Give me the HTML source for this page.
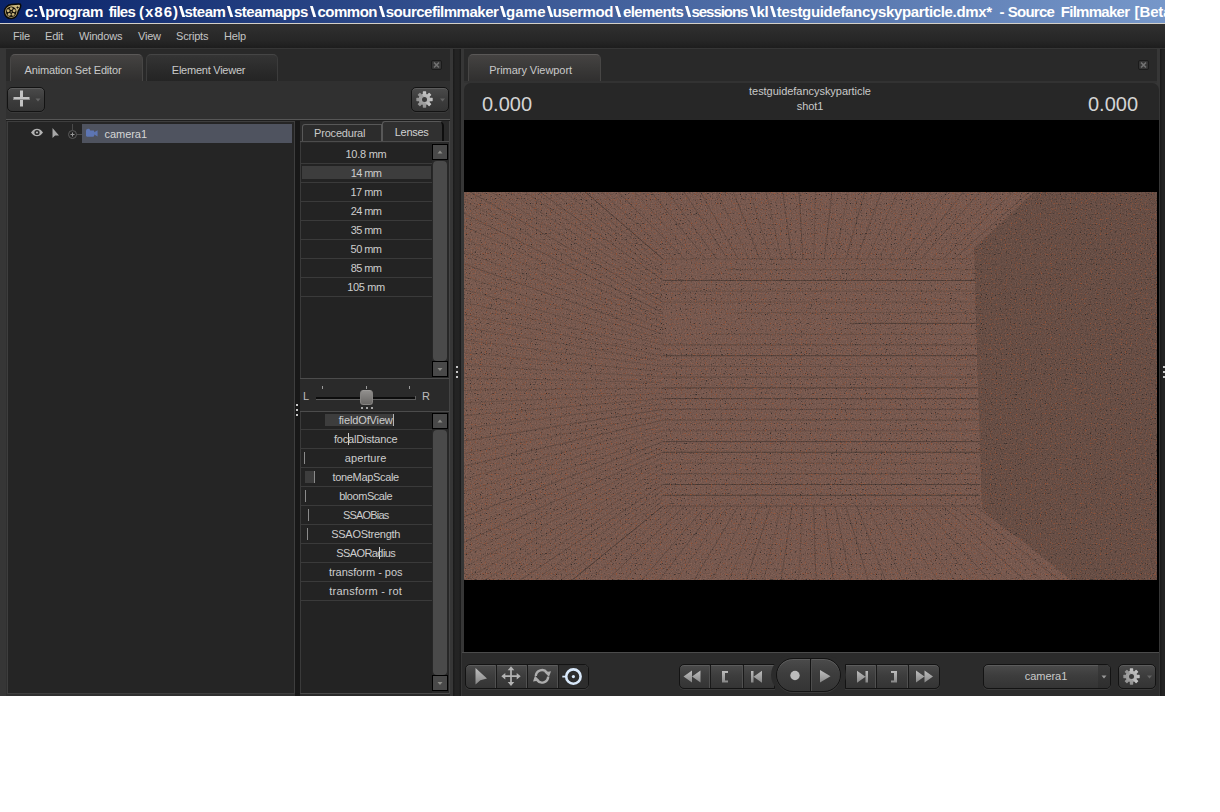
<!DOCTYPE html>
<html>
<head>
<meta charset="utf-8">
<title>Source Filmmaker</title>
<style>
*{box-sizing:border-box;margin:0;padding:0}
html,body{width:1220px;height:812px;background:#fff;overflow:hidden}
body{font-family:"Liberation Sans",sans-serif;font-size:11px;color:#c9c9c9}
#win{position:absolute;left:0;top:0;width:1165px;height:696px;background:#363636;overflow:hidden}
#win div,#win svg{position:absolute}
.t{white-space:nowrap;line-height:14px;height:14px;letter-spacing:-0.2px;color:#c9c9c9}
.c{text-align:center}
.tab{border:1px solid #474645;border-bottom:none;border-radius:5px 5px 0 0}
.tab.on{background:linear-gradient(#454342,#3a3938 50%,#302f2f);border-top-color:#5a5857}
.tab.off{background:linear-gradient(#343434,#2a2a2a 60%,#242424);border-color:#3c3c3c;border-top-color:#454545}
.btn{border:1px solid #131313;border-radius:5px;background:linear-gradient(#4b4b4b,#3d3d3d 45%,#343434);box-shadow:inset 0 1px 0 #5c5c5c,0 1px 0 #3a3a3a}
.xb{border:1px solid #1b1b1b;border-radius:2px;background:#353535}
.tw{top:1px;font-weight:bold;font-size:15px;line-height:21px;color:#fff;white-space:nowrap}
.big{font-size:20px;line-height:24px;height:24px;color:#d4d4d4;white-space:nowrap;letter-spacing:0}
</style>
</head>
<body>
<div id="win">
<div style="left:0px;top:0px;width:1165px;height:23px;background:linear-gradient(90deg,#0a246a 0%,#7697c9 100%);overflow:hidden"><div class="tw" style="left:25.00px;letter-spacing:0.000px">c:</div><div class="tw" style="left:39.78px;transform:scaleX(1.6)">\</div><div class="tw" style="left:45.25px;letter-spacing:-0.458px">program </div><div class="tw" style="left:108.75px;letter-spacing:-0.750px">files </div><div class="tw" style="left:139.00px;letter-spacing:1.000px">(x86)</div><div class="tw" style="left:179.78px;transform:scaleX(1.6)">\</div><div class="tw" style="left:184.50px;letter-spacing:-0.500px">steam</div><div class="tw" style="left:228.16px;transform:scaleX(1.6)">\</div><div class="tw" style="left:234.00px;letter-spacing:-0.500px">steamapps</div><div class="tw" style="left:310.66px;transform:scaleX(1.6)">\</div><div class="tw" style="left:317.50px;letter-spacing:-0.500px">common</div><div class="tw" style="left:379.66px;transform:scaleX(1.6)">\</div><div class="tw" style="left:385.75px;letter-spacing:-0.500px">sourcefilmmaker</div><div class="tw" style="left:501.16px;transform:scaleX(1.6)">\</div><div class="tw" style="left:506.00px;letter-spacing:0.167px">game</div><div class="tw" style="left:547.66px;transform:scaleX(1.6)">\</div><div class="tw" style="left:552.75px;letter-spacing:-0.458px">usermod</div><div class="tw" style="left:616.16px;transform:scaleX(1.6)">\</div><div class="tw" style="left:623.00px;letter-spacing:-0.607px">elements</div><div class="tw" style="left:686.16px;transform:scaleX(1.6)">\</div><div class="tw" style="left:691.50px;letter-spacing:-1.036px">sessions</div><div class="tw" style="left:751.16px;transform:scaleX(1.6)">\</div><div class="tw" style="left:756.50px;letter-spacing:-0.250px">kl</div><div class="tw" style="left:770.66px;transform:scaleX(1.6)">\</div><div class="tw" style="left:776.75px;letter-spacing:-0.336px">testguidefancyskyparticle.dmx* </div><div class="tw" style="left:999.50px;letter-spacing:0.000px">- </div><div class="tw" style="left:1007.75px;letter-spacing:-0.750px">Source </div><div class="tw" style="left:1060.75px;letter-spacing:-0.719px">Filmmaker </div><div class="tw" style="left:1134.50px;letter-spacing:-0.100px">[Beta]</div></div>
<svg style="left:2px;top:2px" width="21" height="19" viewBox="0 0 21 19" ><path d="M9.5 2.6C13 2.2 17 1.8 18.3 2.2C19.3 3.6 18.4 6.2 16.2 9.3C15.8 13.6 12.8 16.6 9.2 16.6C5.3 16.6 2.4 13.6 2.4 9.8C2.4 6 5.4 3 9.5 2.6Z" fill="#c9b57c" stroke="#0b0a06" stroke-width="1.5"/><circle cx="9.2" cy="9.8" r="5.3" fill="#15120a"/><g fill="#c9b57c"><circle cx="9.2" cy="6.6" r="1.45"/><circle cx="12.2" cy="8.8" r="1.45"/><circle cx="11.1" cy="12.4" r="1.45"/><circle cx="7.3" cy="12.4" r="1.45"/><circle cx="6.2" cy="8.8" r="1.45"/><circle cx="9.2" cy="9.9" r="0.7"/></g><path d="M15.6 3.9l.5 1.1 1.1.5-1.1.5-.5 1.1-.5-1.1-1.1-.5 1.1-.5z" fill="#15120a"/></svg>
<div style="left:0px;top:23px;width:1165px;height:1px;background:#d4d0c8"></div>
<div style="left:0px;top:24px;width:1165px;height:24px;background:linear-gradient(#303030,#262626 70%,#1d1d1d)"></div>
<div class="t" style="left:13px;top:29px;color:#c4c4c4">File</div>
<div class="t" style="left:45px;top:29px;color:#c4c4c4">Edit</div>
<div class="t" style="left:79px;top:29px;color:#c4c4c4">Windows</div>
<div class="t" style="left:138px;top:29px;color:#c4c4c4">View</div>
<div class="t" style="left:176px;top:29px;color:#c4c4c4">Scripts</div>
<div class="t" style="left:224px;top:29px;color:#c4c4c4">Help</div>
<div style="left:6px;top:49px;width:444px;height:647px;background:#303030"></div>
<div style="left:6px;top:49px;width:444px;height:32px;background:#292929"></div>
<div class="tab on" style="left:10px;top:54px;width:133px;height:27px;"></div>
<div class="t c" style="left:-77px;top:63px;width:300px;letter-spacing:-0.17px">Animation Set Editor</div>
<div class="tab off" style="left:146px;top:54px;width:132px;height:27px;"></div>
<div class="t c" style="left:58.5px;top:63px;width:300px;letter-spacing:-0.25px">Element Viewer</div>
<div class="xb" style="left:431px;top:60px;width:11px;height:10px;"><svg style="left:0;top:0" width="9" height="8" viewBox="0 0 9 8"><path d="M2 1.5L7 6.5M7 1.5L2 6.5" stroke="#727272" stroke-width="1.7" fill="none"/></svg></div>
<div class="btn" style="left:6.5px;top:86.5px;width:38px;height:25px;"></div>
<svg style="left:7px;top:87px" width="37" height="25" viewBox="0 0 37 25" ><path d="M6.5 11.5h16M14.5 3.5v16" stroke="#c2c2c2" stroke-width="3" fill="none"/><path d="M6.5 12.5h16" stroke="#8e8e8e" stroke-width="1" fill="none"/><path d="M28.5 11.5h5l-2.5 3z" fill="#646464"/></svg>
<div class="btn" style="left:410.5px;top:86.5px;width:38px;height:25px;"></div>
<svg style="left:410.5px;top:86.5px" width="38" height="25" viewBox="0 0 38 25" ><defs><linearGradient id="gg1" x1="0" y1="0" x2="0" y2="1"><stop offset="0" stop-color="#c6c6c6"/><stop offset="1" stop-color="#909090"/></linearGradient></defs><g transform="translate(13.5,12.5)"><g fill="url(#gg1)"><circle r="5.7"/><rect x="-1.7" y="-8.2" width="3.4" height="16.4" rx="0.6"/><rect x="-1.7" y="-8.2" width="3.4" height="16.4" rx="0.6" transform="rotate(45)"/><rect x="-1.7" y="-8.2" width="3.4" height="16.4" rx="0.6" transform="rotate(90)"/><rect x="-1.7" y="-8.2" width="3.4" height="16.4" rx="0.6" transform="rotate(135)"/></g><circle r="2.5" fill="#3b3b3b"/></g><path d="M29 11.5h5l-2.5 3z" fill="#646464"/></svg>
<div style="left:6px;top:119px;width:444px;height:1px;background:#565656"></div>
<div style="left:6px;top:120px;width:444px;height:1px;background:#1e1e1e"></div>
<div style="left:7px;top:121px;width:288px;height:573px;background:#252525;border:1px solid #3e3e3e"></div>
<div style="left:82px;top:124px;width:210px;height:19px;background:#4f535f"></div>
<div class="t" style="left:104.5px;top:127px;color:#d6d6d6;letter-spacing:-0.05px">camera1</div>
<svg style="left:28px;top:124px" width="58" height="19" viewBox="0 0 58 19" ><path d="M44.5 0v6M49 10.5h5" stroke="#4a4a4a" stroke-width="1" fill="none"/><circle cx="44.5" cy="10.5" r="4" fill="none" stroke="#5a5a5a" stroke-width="1"/><path d="M42.5 10.5h4M44.5 8.5v4" stroke="#9a9a9a" stroke-width="1" fill="none"/><path d="M3 8.5C5 5.6 7 4.8 9 4.8S13 5.6 15 8.5C13 11.4 11 12.2 9 12.2S5 11.4 3 8.5Z" fill="#b4b4b4"/><circle cx="9" cy="8.5" r="2.6" fill="#2a2a2a"/><circle cx="9" cy="8.5" r="1.1" fill="#b4b4b4"/><path d="M24.5 4v10l2.6-2.4L31 11.4z" fill="#a8a8a8"/></svg>
<svg style="left:85px;top:128px" width="14" height="10" viewBox="0 0 14 10" ><path d="M1 3.2C1 1.6 2 .8 3.2 .8S5 1.4 5.2 2.4H8.2C8.8 2.4 9.2 2.8 9.2 3.4V4.2L12.6 2.2V8.6L9.2 6.6V7.6C9.2 8.3 8.8 8.7 8.2 8.7H2.2C1.5 8.7 1 8.3 1 7.6Z" fill="#5d75b3"/></svg>
<div style="left:295px;top:121px;width:5px;height:575px;background:#181818"></div>
<div style="left:296px;top:404px;width:2px;height:2px;background:#c6c6c6"></div>
<div style="left:296px;top:409px;width:2px;height:2px;background:#c6c6c6"></div>
<div style="left:296px;top:414px;width:2px;height:2px;background:#c6c6c6"></div>
<div style="left:300px;top:121px;width:150px;height:575px;background:#2a2a2a"></div>
<div style="left:302px;top:124px;width:80px;height:17px;border:1px solid #585858;border-bottom:none;border-radius:3px 0 0 0;background:#2c2c2c"></div>
<div class="t c" style="left:189.7px;top:126px;width:300px;letter-spacing:-0.2px">Procedural</div>
<div style="left:382px;top:121px;width:62px;height:20px;border:1px solid #585858;border-bottom:none;border-right:2px solid #0e0e0e;border-radius:3px 5px 0 0;background:#303030"></div>
<div class="t c" style="left:261.6px;top:125px;width:300px;letter-spacing:-0.3px;color:#d2d2d2">Lenses</div>
<div style="left:300px;top:141px;width:150px;height:1px;background:#4c4c4c"></div>
<div style="left:300px;top:142px;width:1px;height:236px;background:#3a3a3a"></div>
<div style="left:301px;top:143px;width:131px;height:235px;background:#232323"></div>
<div style="left:302px;top:166px;width:129px;height:13px;background:#3d3d3d"></div>
<div style="left:301px;top:163px;width:131px;height:1px;background:#3a3a3a"></div>
<div class="t c" style="left:216.0px;top:147px;width:300px;letter-spacing:-0.25px;color:#cdcdcd">10.8 mm</div>
<div style="left:301px;top:182px;width:131px;height:1px;background:#3a3a3a"></div>
<div class="t c" style="left:216.0px;top:166px;width:300px;letter-spacing:-0.6px;color:#cdcdcd">14 mm</div>
<div style="left:301px;top:201px;width:131px;height:1px;background:#3a3a3a"></div>
<div class="t c" style="left:216.0px;top:185px;width:300px;letter-spacing:-0.5px;color:#cdcdcd">17 mm</div>
<div style="left:301px;top:220px;width:131px;height:1px;background:#3a3a3a"></div>
<div class="t c" style="left:216.0px;top:204px;width:300px;letter-spacing:-0.6px;color:#cdcdcd">24 mm</div>
<div style="left:301px;top:239px;width:131px;height:1px;background:#3a3a3a"></div>
<div class="t c" style="left:216.0px;top:223px;width:300px;letter-spacing:-0.6px;color:#cdcdcd">35 mm</div>
<div style="left:301px;top:258px;width:131px;height:1px;background:#3a3a3a"></div>
<div class="t c" style="left:216.0px;top:242px;width:300px;letter-spacing:-0.55px;color:#cdcdcd">50 mm</div>
<div style="left:301px;top:277px;width:131px;height:1px;background:#3a3a3a"></div>
<div class="t c" style="left:216.0px;top:261px;width:300px;letter-spacing:-0.6px;color:#cdcdcd">85 mm</div>
<div style="left:301px;top:296px;width:131px;height:1px;background:#3a3a3a"></div>
<div class="t c" style="left:216.0px;top:280px;width:300px;letter-spacing:-0.35px;color:#cdcdcd">105 mm</div>
<div style="left:432px;top:144px;width:17px;height:234px;background:#272727"></div>
<div style="left:433px;top:161px;width:14px;height:200px;background:#4a4a4a;border-radius:4px"></div>
<div style="left:432px;top:144px;width:16px;height:16px;background:#494949;border:1px solid #000"></div>
<svg style="left:432px;top:144px" width="16" height="16" viewBox="0 0 16 16" ><path d="M5.500 9.500l2.500-3 2.500 3z" fill="#8c8c88"/></svg>
<div style="left:432px;top:361px;width:16px;height:16px;background:#494949;border:1px solid #000"></div>
<svg style="left:432px;top:361px" width="16" height="16" viewBox="0 0 16 16" ><path d="M5.500 7l2.500 3 2.500-3z" fill="#8c8c88"/></svg>
<div style="left:300px;top:378px;width:150px;height:1px;background:#4c4c4c"></div>
<div class="t" style="left:303px;top:389px;color:#bdbdbd">L</div>
<div class="t" style="left:422px;top:389px;color:#bdbdbd">R</div>
<div style="left:316px;top:396.5px;width:99px;height:2px;background:#0c0c0c"></div>
<div style="left:316px;top:399px;width:100px;height:1px;background:#5c5c5c"></div>
<div style="left:415px;top:395.5px;width:1px;height:4px;background:#5c5c5c"></div>
<div style="left:322px;top:386px;width:1px;height:3px;background:#9a9a9a"></div>
<div style="left:366px;top:386px;width:1px;height:3px;background:#9a9a9a"></div>
<div style="left:409px;top:386px;width:1px;height:3px;background:#9a9a9a"></div>
<div style="left:360px;top:390px;width:13px;height:15px;border-radius:3.500px;background:linear-gradient(#908e8c,#6a6866);border:1px solid #858381;border-top-color:#9c9a98"></div>
<div style="left:361px;top:407px;width:1.5px;height:2px;background:#a4a4a4"></div>
<div style="left:366px;top:407px;width:1.5px;height:2px;background:#a4a4a4"></div>
<div style="left:371px;top:407px;width:1.5px;height:2px;background:#a4a4a4"></div>
<div style="left:300px;top:411px;width:150px;height:1px;background:#4c4c4c"></div>
<div style="left:300px;top:412px;width:1px;height:282px;background:#3a3a3a"></div>
<div style="left:301px;top:412px;width:131px;height:281px;background:#232323"></div>
<div style="left:325px;top:413.5px;width:68px;height:12.5px;background:#3d3d3d"></div>
<div style="left:301px;top:429px;width:131px;height:1px;background:#3a3a3a"></div>
<div class="t c" style="left:215.7px;top:413px;width:300px;letter-spacing:-0.13px;color:#cdcdcd">fieldOfView</div>
<div style="left:301px;top:448px;width:131px;height:1px;background:#3a3a3a"></div>
<div class="t c" style="left:215.7px;top:432px;width:300px;letter-spacing:-0.2px;color:#cdcdcd">focalDistance</div>
<div style="left:301px;top:467px;width:131px;height:1px;background:#3a3a3a"></div>
<div class="t c" style="left:215.7px;top:451px;width:300px;letter-spacing:0.11px;color:#cdcdcd">aperture</div>
<div style="left:301px;top:486px;width:131px;height:1px;background:#3a3a3a"></div>
<div class="t c" style="left:215.7px;top:470px;width:300px;letter-spacing:-0.32px;color:#cdcdcd">toneMapScale</div>
<div style="left:301px;top:505px;width:131px;height:1px;background:#3a3a3a"></div>
<div class="t c" style="left:215.7px;top:489px;width:300px;letter-spacing:-0.45px;color:#cdcdcd">bloomScale</div>
<div style="left:301px;top:524px;width:131px;height:1px;background:#3a3a3a"></div>
<div class="t c" style="left:215.7px;top:508px;width:300px;letter-spacing:-0.8px;color:#cdcdcd">SSAOBias</div>
<div style="left:301px;top:543px;width:131px;height:1px;background:#3a3a3a"></div>
<div class="t c" style="left:215.7px;top:527px;width:300px;letter-spacing:-0.26px;color:#cdcdcd">SSAOStrength</div>
<div style="left:301px;top:562px;width:131px;height:1px;background:#3a3a3a"></div>
<div class="t c" style="left:215.7px;top:546px;width:300px;letter-spacing:-0.57px;color:#cdcdcd">SSAORadius</div>
<div style="left:301px;top:581px;width:131px;height:1px;background:#3a3a3a"></div>
<div class="t c" style="left:215.7px;top:565px;width:300px;letter-spacing:-0.03px;color:#cdcdcd">transform - pos</div>
<div style="left:301px;top:600px;width:131px;height:1px;background:#3a3a3a"></div>
<div class="t c" style="left:215.7px;top:584px;width:300px;letter-spacing:0.25px;color:#cdcdcd">transform - rot</div>
<div style="left:432px;top:413px;width:17px;height:279px;background:#272727"></div>
<div style="left:433px;top:430px;width:14px;height:245px;background:#4a4a4a;border-radius:4px"></div>
<div style="left:432px;top:413px;width:16px;height:16px;background:#494949;border:1px solid #000"></div>
<svg style="left:432px;top:413px" width="16" height="16" viewBox="0 0 16 16" ><path d="M5.500 9.500l2.500-3 2.500 3z" fill="#8c8c88"/></svg>
<div style="left:432px;top:675px;width:16px;height:16px;background:#494949;border:1px solid #000"></div>
<svg style="left:432px;top:675px" width="16" height="16" viewBox="0 0 16 16" ><path d="M5.500 7l2.500 3 2.500-3z" fill="#8c8c88"/></svg>
<div style="left:300px;top:693px;width:150px;height:1px;background:#4a4a4a"></div>
<div style="left:449px;top:121px;width:1px;height:573px;background:#444"></div>
<div style="left:393px;top:413.5px;width:1px;height:12.5px;background:#b4b4b4"></div>
<div style="left:348px;top:433px;width:1px;height:12px;background:#cfcfcf"></div>
<div style="left:304px;top:452px;width:1px;height:12px;background:#8a8a8a"></div>
<div style="left:305px;top:471px;width:9px;height:12px;background:#3d3d3d"></div>
<div style="left:314px;top:471px;width:1px;height:12px;background:#8a8a8a"></div>
<div style="left:305px;top:490px;width:1px;height:12px;background:#8a8a8a"></div>
<div style="left:308px;top:509px;width:1px;height:12px;background:#8a8a8a"></div>
<div style="left:307px;top:528px;width:1px;height:12px;background:#8a8a8a"></div>
<div style="left:379px;top:547px;width:1px;height:12px;background:#cfcfcf"></div>
<div style="left:453px;top:49px;width:8px;height:647px;background:linear-gradient(90deg,#191919,#232323 30%,#232323 70%,#191919)"></div>
<div style="left:456px;top:366px;width:2px;height:2px;background:#c6c6c6"></div>
<div style="left:456px;top:371px;width:2px;height:2px;background:#c6c6c6"></div>
<div style="left:456px;top:376px;width:2px;height:2px;background:#c6c6c6"></div>
<div style="left:1160px;top:49px;width:5px;height:647px;background:linear-gradient(90deg,#191919,#232323 50%,#232323)"></div>
<div style="left:1163px;top:366px;width:2px;height:2px;background:#c6c6c6"></div>
<div style="left:1163px;top:371px;width:2px;height:2px;background:#c6c6c6"></div>
<div style="left:1163px;top:376px;width:2px;height:2px;background:#c6c6c6"></div>
<div style="left:464px;top:49px;width:693px;height:34px;background:#292929"></div>
<div style="left:464px;top:81px;width:693px;height:2px;background:#323232"></div>
<div class="tab on" style="left:468px;top:54px;width:133px;height:27px;"></div>
<div class="t c" style="left:380.70000000000005px;top:63px;width:300px;letter-spacing:-0.05px">Primary Viewport</div>
<div class="xb" style="left:1138px;top:60px;width:11px;height:10px;"><svg style="left:0;top:0" width="9" height="8" viewBox="0 0 9 8"><path d="M2 1.5L7 6.5M7 1.5L2 6.5" stroke="#727272" stroke-width="1.7" fill="none"/></svg></div>
<div style="left:464px;top:83px;width:695px;height:613px;background:#272727;border-radius:7px 7px 0 0"></div>
<div class="big" style="left:482px;top:92px">0.000</div>
<div class="big" style="left:1088px;top:92px">0.000</div>
<div class="t c" style="left:660px;top:84px;width:300px;letter-spacing:-0.04px">testguidefancyskyparticle</div>
<div class="t c" style="left:660px;top:99px;width:300px;letter-spacing:-0.1px">shot1</div>
<div style="left:464px;top:120px;width:695px;height:532px;background:#000"></div>
<div style="left:462px;top:652px;width:697px;height:44px;background:#2b2b2b"></div>
<div style="left:462px;top:652px;width:697px;height:1px;background:#4b4b4b"></div>
<svg style="left:464px;top:192px" width="693" height="388" viewBox="0 0 693 388" ><defs><filter id="nz" x="0" y="0" width="100%" height="100%" color-interpolation-filters="sRGB"><feTurbulence type="fractalNoise" baseFrequency="0.8" numOctaves="1" seed="4" result="t"/><feColorMatrix in="t" type="matrix" values="1.3 0 0 0 -0.15  0.9 0 0 0 0.05  0.8 0 0 0 0.1  0 0 0 0 1" result="n"/><feComposite in="SourceGraphic" in2="n" operator="arithmetic" k1="0" k2="1" k3="0.17" k4="-0.085" result="a"/><feColorMatrix in="t" type="matrix" values="0 0 0 0 0.2  0 0 0 0 0.17  0 0 0 0 0.16  0 7 0 0 -4.5" result="sp"/><feColorMatrix in="t" type="matrix" values="0 0 0 0 0.6  0 0 0 0 0.32  0 0 0 0 0.2  0 0 6 0 -3.75" result="sp2"/><feMerge><feMergeNode in="a"/><feMergeNode in="sp"/><feMergeNode in="sp2"/></feMerge></filter>
<linearGradient id="lw" x1="0" x2="1" y1="0" y2="0"><stop offset="0" stop-color="#785a4f"/><stop offset="1" stop-color="#77594f"/></linearGradient></defs>
<g filter="url(#nz)"><rect width="693" height="388" fill="#77594f"/>
<polygon points="0,0 124,0 199,67 199,314 112,388 0,388" fill="url(#lw)"/>
<path d="M199 67.0H516 M199 72.4L0 -92.3 M199 77.7L0 -79.6 M263 77.7H516 M199 83.1L0 -67.0 M199 93.8L0 -41.7 M199 99.2L0 -29.1 M199 99.2H516 M199 104.6L0 -16.5 M199 110.0H516 M199 115.3L0 8.8 M270 120.7H516 M199 126.1L0 34.1 M199 131.4L0 46.7 M199 136.8L0 59.4 M250 142.2H516 M199 147.5L0 84.7 M199 152.9L0 97.3 M199 158.3L0 109.9 M199 163.7L0 122.6 M199 169.0L0 135.2 M199 174.4L0 147.8 M199 174.4H516 M199 179.8L0 160.5 M199 185.1L0 173.1 M199 190.5L0 185.8 M199 195.9L0 198.4 M199 201.2L0 211.0 M199 206.6L0 223.7 M199 212.0L0 236.3 M199 222.7L0 261.6 M199 233.5L0 286.9 M199 238.8L0 299.5 M199 238.8H516 M199 244.2L0 312.1 M199 254.9L0 337.4 M199 265.7L0 362.7 M199 271.0L0 375.3 M199 271.0H516 M199 276.4L0 388.0 M199 281.8L0 400.6 M199 287.2L0 413.3 M199 297.9L0 438.5 M199 303.3L0 451.2 M199 308.6L0 463.8 M209.8 67L137.9 0 M209.8 314L125.7 388 M231.3 67L170.8 0 M231.3 314L160.5 388 M263.6 314L212.7 388 M285.1 67L252.9 0 M285.1 314L247.5 388 M295.8 314L264.9 388 M306.6 67L285.8 0 M317.3 67L302.2 0 M317.3 314L299.7 388 M338.9 314L334.5 388 M349.6 67L351.5 0 M371.1 67L384.4 0 M403.4 67L433.7 0 M403.4 314L438.8 388 M414.2 67L450.1 0 M414.2 314L456.2 388 M424.9 67L466.6 0 M424.9 314L473.6 388 M435.7 67L483.0 0 M435.7 314L491.0 388 M446.4 314L508.4 388 M468.0 67L532.3 0 M468.0 314L543.2 388 M489.5 314L578.0 388 M500.2 67L581.6 0" stroke="#2e2724" stroke-opacity="0.18" stroke-width="1" fill="none"/><path d="M199 67.0L0 -104.9 M199 88.5L0 -54.4 M199 110.0L0 -3.8 M199 120.7L0 21.5 M199 142.2L0 72.0 M199 152.9H516 M199 185.1H516 M199 217.3L0 249.0 M199 217.3H516 M199 228.1L0 274.2 M199 228.1H516 M199 249.6L0 324.8 M199 260.3L0 350.1 M199 281.8H516 M199 292.5L0 425.9 M199 314.0L0 476.4 M199 314.0H516 M199.0 67L121.4 0 M199.0 314L108.3 388 M220.5 67L154.3 0 M220.5 314L143.1 388 M242.0 67L187.2 0 M242.0 314L177.9 388 M252.8 67L203.6 0 M252.8 314L195.3 388 M263.6 67L220.1 0 M274.3 67L236.5 0 M274.3 314L230.1 388 M295.8 67L269.4 0 M306.6 314L282.3 388 M328.1 67L318.7 0 M328.1 314L317.1 388 M338.9 67L335.1 0 M349.6 314L351.9 388 M360.4 67L368.0 0 M360.4 314L369.2 388 M371.1 314L386.6 388 M381.9 67L400.8 0 M381.9 314L404.0 388 M392.7 67L417.3 0 M392.7 314L421.4 388 M446.4 67L499.4 0 M457.2 67L515.9 0 M457.2 314L525.8 388 M478.7 67L548.7 0 M478.7 314L560.6 388 M489.5 67L565.2 0 M500.2 314L595.4 388 M511.0 67L598.0 0 M511.0 314L612.8 388" stroke="#2e2724" stroke-opacity="0.3" stroke-width="1" fill="none"/><path d="M199 88.5H516 M386 131.4H516 M199 163.7H516 M199 195.9H516 M199 206.6H516 M199 249.6H516 M199 260.3H516 M199 292.5H516 M199 303.3H516" stroke="#2e2724" stroke-opacity="0.5" stroke-width="1" fill="none"/>
<polygon points="570,0 510,56 514,194 518,317 607,388 693,388 693,0" fill="#674e45"/></g></svg>
<div class="btn" style="left:464.5px;top:663.5px;width:124px;height:25px;overflow:hidden"></div>
<div style="left:557.5px;top:665px;width:30px;height:23px;background:#2d2d2d;border-radius:0 4px 4px 0"></div>
<div style="left:494.5px;top:665px;width:1px;height:23px;background:#505050"></div>
<div style="left:495.5px;top:665px;width:1px;height:23px;background:#1a1a1a"></div>
<div style="left:525.5px;top:665px;width:1px;height:23px;background:#505050"></div>
<div style="left:526.5px;top:665px;width:1px;height:23px;background:#1a1a1a"></div>
<div style="left:556.5px;top:665px;width:1px;height:23px;background:#505050"></div>
<div style="left:557.5px;top:665px;width:1px;height:23px;background:#1a1a1a"></div>
<svg style="left:464.5px;top:664px" width="124" height="25" viewBox="0 0 124 25" ><defs><linearGradient id="ig1" x1="0" y1="0" x2="0" y2="1"><stop offset="0" stop-color="#c0c0c0"/><stop offset="1" stop-color="#868686"/></linearGradient></defs><path d="M10.5 4v16.500l4.800-4.300L22 14.500z" fill="url(#ig1)"/><g stroke="#b4b4b4" stroke-width="1.700" fill="none"><path d="M38.500 12.200h15M46 4.500v15.500"/></g><g fill="#b4b4b4"><path d="M46 2.300l3.300 4h-6.600zM46 22l3.300-4h-6.600zM36.300 12.200l4-3.300v6.600zM55.700 12.200l-4-3.300v6.600z"/></g><g stroke="#adadad" stroke-width="2.400" fill="none"><path d="M70.800 12a6.200 6.200 0 0 1 11.200-3.400"/><path d="M83.200 12.600a6.200 6.200 0 0 1-11.200 3.400"/></g><g fill="#adadad"><path d="M86 7.200l-6.600 1 4.600 4.600z"/><path d="M68 17.400l6.600-1-4.600-4.600z"/></g><circle cx="108.400" cy="12.600" r="7.200" fill="none" stroke="#d9e9fb" stroke-width="2.600"/><circle cx="108.400" cy="12.600" r="1.600" fill="#d9e9fb"/><path d="M97.300 12.600h4" stroke="#d9e9fb" stroke-width="1.800"/></svg>
<div class="btn" style="left:679px;top:663.5px;width:96px;height:25px;border-radius:5px 0 0 5px"></div>
<div class="btn" style="left:845px;top:663.5px;width:95px;height:25px;border-radius:0 5px 5px 0"></div>
<div style="left:709px;top:664.5px;width:1px;height:23px;background:#505050"></div>
<div style="left:710px;top:664.5px;width:1px;height:23px;background:#1a1a1a"></div>
<div style="left:742px;top:664.5px;width:1px;height:23px;background:#505050"></div>
<div style="left:743px;top:664.5px;width:1px;height:23px;background:#1a1a1a"></div>
<div style="left:875px;top:664.5px;width:1px;height:23px;background:#505050"></div>
<div style="left:876px;top:664.5px;width:1px;height:23px;background:#1a1a1a"></div>
<div style="left:907px;top:664.5px;width:1px;height:23px;background:#505050"></div>
<div style="left:908px;top:664.5px;width:1px;height:23px;background:#1a1a1a"></div>
<div style="left:771px;top:656px;width:75px;height:38px;border-radius:19px;background:#2b2b2b"></div>
<div class="btn" style="left:776px;top:658px;width:65px;height:34px;border-radius:17px"></div>
<div style="left:810px;top:659px;width:1px;height:32px;background:#151515"></div>
<div style="left:811px;top:659px;width:1px;height:32px;background:#4e4e4e"></div>
<svg style="left:679px;top:663.5px" width="262" height="25" viewBox="0 0 262 25" ><defs><linearGradient id="ig2" gradientUnits="userSpaceOnUse" x1="0" y1="6" x2="0" y2="19"><stop offset="0" stop-color="#c0c0c0"/><stop offset="1" stop-color="#868686"/></linearGradient></defs><g fill="url(#ig2)"><path d="M4.500 12.500l8.500-6v12zM13 12.500l8.500-6v12z"/><path d="M43 7h6v2h-3v7.500h3v2h-6z"/><path d="M72 7h2.500v11.500h-2.500zM74.500 12.700l8.500-6v12z"/><circle cx="116" cy="11.500" r="4.700" fill="#bcbcbc"/><path d="M141 6l10.500 6.200-10.500 6.200z"/><path d="M178 6.700l8.500 6-8.500 6zM186.500 7h2.500v11.500h-2.500z"/><path d="M212 7h6v11.500h-6v-2h3v-7.500h-3z"/><path d="M237 6.500l8.500 6-8.500 6zM245.500 6.500l8.500 6-8.500 6z"/></g></svg>
<div class="btn" style="left:983px;top:663.5px;width:128px;height:25px;"></div>
<div style="left:1098px;top:664.5px;width:12px;height:23px;background:linear-gradient(#3a3a3a,#2e2e2e);border-radius:0 4px 4px 0"></div>
<div class="t c" style="left:896px;top:669px;width:300px;letter-spacing:-0.05px">camera1</div>
<svg style="left:1098px;top:663.5px" width="14" height="25" viewBox="0 0 14 25" ><path d="M3.500 11.500h5l-2.500 3z" fill="#9a9a9a"/></svg>
<div class="btn" style="left:1118px;top:663.5px;width:38px;height:25px;"></div>
<svg style="left:1118px;top:663.5px" width="38" height="25" viewBox="0 0 38 25" ><defs><linearGradient id="gg2" x1="0" y1="0" x2="0" y2="1"><stop offset="0" stop-color="#c6c6c6"/><stop offset="1" stop-color="#909090"/></linearGradient></defs><g transform="translate(13.5,12.5)"><g fill="url(#gg2)"><circle r="5.7"/><rect x="-1.7" y="-8.2" width="3.4" height="16.4" rx="0.6"/><rect x="-1.7" y="-8.2" width="3.4" height="16.4" rx="0.6" transform="rotate(45)"/><rect x="-1.7" y="-8.2" width="3.4" height="16.4" rx="0.6" transform="rotate(90)"/><rect x="-1.7" y="-8.2" width="3.4" height="16.4" rx="0.6" transform="rotate(135)"/></g><circle r="2.5" fill="#3b3b3b"/></g><path d="M29 11.500h5l-2.500 3z" fill="#646464"/></svg>
</div>
</body>
</html>
